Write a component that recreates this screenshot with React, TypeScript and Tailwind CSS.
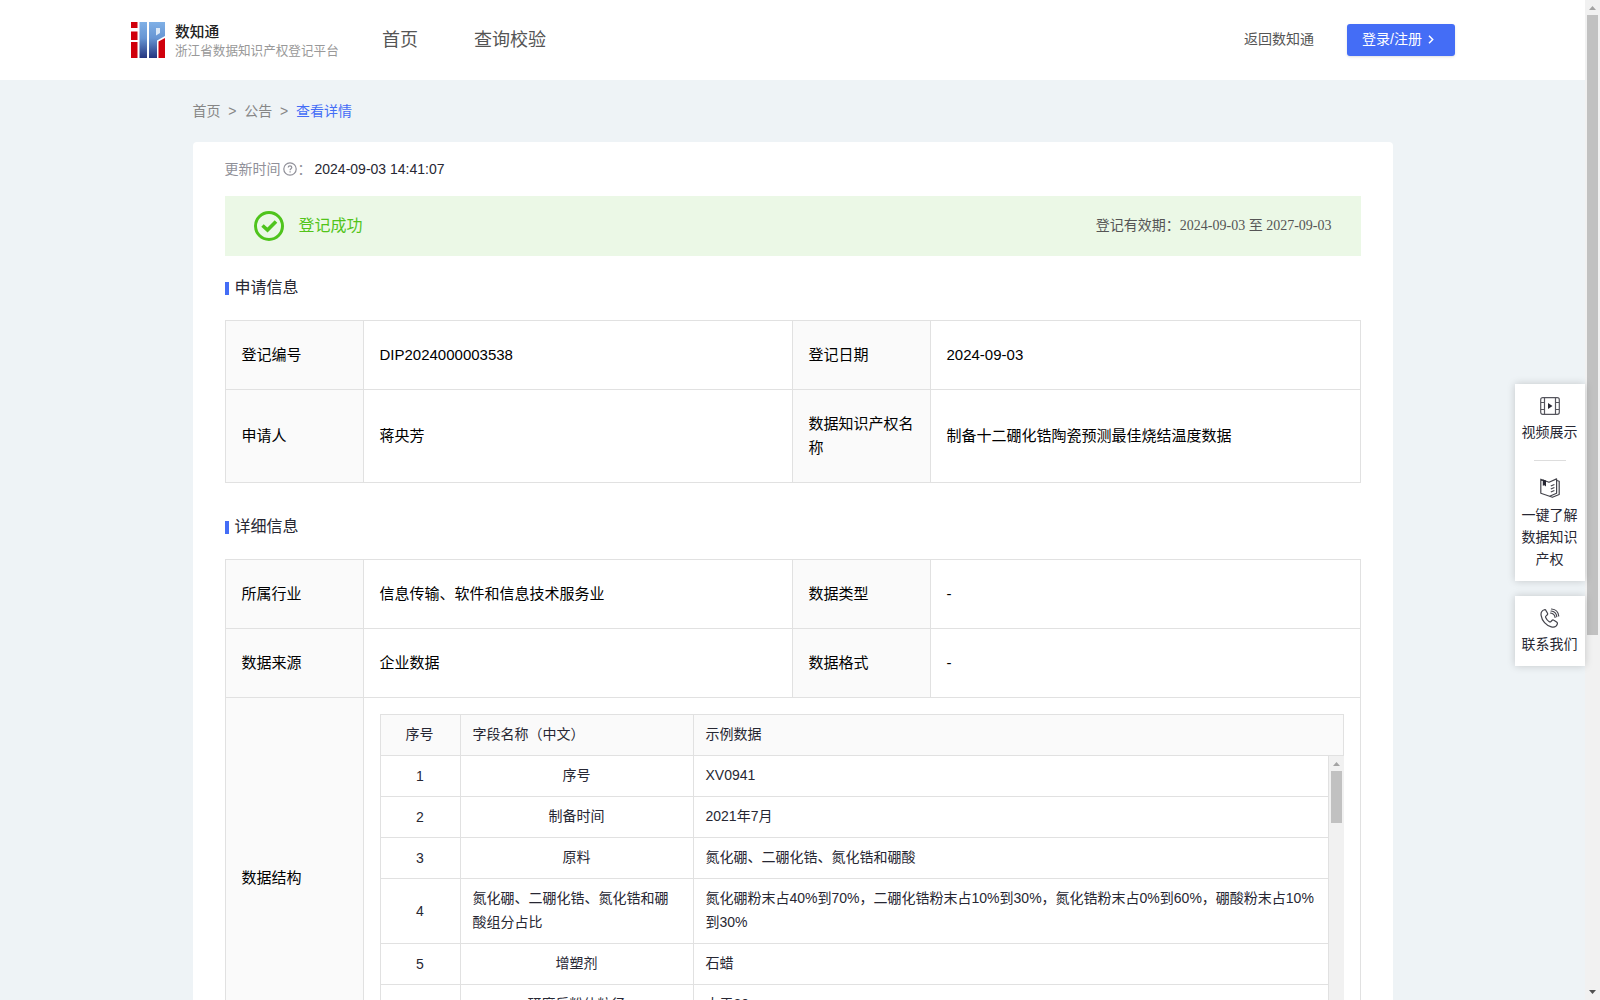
import type { ReactNode } from "react";

type FieldRow = { no: number; name: string; sample: string; wrap?: boolean };

const FIELDS: FieldRow[] = [
  { no: 1, name: "序号", sample: "XV0941" },
  { no: 2, name: "制备时间", sample: "2021年7月" },
  { no: 3, name: "原料", sample: "氮化硼、二硼化锆、氮化锆和硼酸" },
  {
    no: 4,
    name: "氮化硼、二硼化锆、氮化锆和硼酸组分占比",
    sample: "氮化硼粉末占40%到70%，二硼化锆粉末占10%到30%，氮化锆粉末占0%到60%，硼酸粉末占10%到30%",
    wrap: true,
  },
  { no: 5, name: "增塑剂", sample: "石蜡" },
  { no: 6, name: "研磨后粉体粒径", sample: "大于20" },
];

function Logo() {
  return (
    <svg width="34" height="36" viewBox="0 0 34 36" className="shrink-0">
      <defs>
        <linearGradient id="logoBlue" gradientUnits="userSpaceOnUse" x1="0" y1="0" x2="0" y2="36">
          <stop offset="0" stopColor="#7fb0e6" />
          <stop offset="0.45" stopColor="#6795d3" />
          <stop offset="1" stopColor="#25357f" />
        </linearGradient>
      </defs>
      <path d="M0 0h6.500v6H0zM0 9.500h6.500V18H0zM0 20h6.500v16H0z" fill="#d0000c" />
      <path d="M8.500 0H16v36H8.500z" fill="url(#logoBlue)" />
      <path d="M18 0h16v14l-8 4.500V36h-8z" fill="url(#logoBlue)" />
      <path d="M25 6h4v5l-4 2.500z" fill="#dce9f8" />
      <path d="M27.500 19.500L34 16v20h-6.500z" fill="#d0000c" />
    </svg>
  );
}

function Header() {
  return (
    <header className="flex h-20 items-center bg-white pl-[131px] pr-[130px]">
      <Logo />
      <div className="ml-[10px] flex w-[172px] flex-col whitespace-nowrap pt-0.5">
        <span className="text-[14.7px] font-medium leading-5 text-[#222]">数知通</span>
        <span className="text-[12.6px] leading-[19px] text-[#999]">浙江省数据知识产权登记平台</span>
      </div>
      <nav className="ml-[35px] flex gap-14 text-lg text-[#555]">
        <a>首页</a>
        <a>查询校验</a>
      </nav>
      <a className="ml-auto pb-0.5 text-sm text-[#555]">返回数知通</a>
      <button className="ml-[33px] flex h-8 w-[108px] items-center rounded-[3px] bg-[#446df6] pb-0.5 pl-[15px] text-sm text-white shadow-sm">
        登录/注册
        <svg width="6" height="9" viewBox="0 0 6 9" className="ml-[6px]">
          <path d="M1 .8l3.700 3.700L1 8.200" fill="none" stroke="#fff" strokeWidth="1.500" />
        </svg>
      </button>
    </header>
  );
}

function SectionTitle({ children }: { children: ReactNode }) {
  return (
    <h2 className="flex h-6 items-center text-base text-[#272733]">
      <i className="mr-[6px] mt-px h-[13px] w-1 bg-[#446df6]" />
      {children}
    </h2>
  );
}

function Label({ children }: { children: ReactNode }) {
  return (
    <div className="flex items-center border-b border-r border-[#e1e1e1] bg-[#fafafa] pl-4 pr-[14px]">{children}</div>
  );
}

function Value({ children }: { children: ReactNode }) {
  return <div className="flex items-center border-b border-r border-[#e1e1e1] px-4">{children}</div>;
}

function FieldTable() {
  return (
    <div className="h-[328px] w-[964px] overflow-hidden text-sm leading-6 text-[#272733]">
      <div className="grid h-[42px] grid-cols-[80px_233px_1fr] border border-[#e1e1e1] bg-[#fafafa]">
        <div className="flex items-center justify-center border-r border-[#e1e1e1] pb-0.5 pr-px">序号</div>
        <div className="flex items-center border-r border-[#e1e1e1] pb-0.5 pl-3">字段名称（中文）</div>
        <div className="flex items-center pb-0.5 pl-3">示例数据</div>
      </div>
      <div className="flex">
        <div className="flex-1 border-x border-[#e1e1e1]">
          {FIELDS.map((f) => (
            <div
              key={f.no}
              className={`grid grid-cols-[80px_233px_1fr] border-b border-[#e1e1e1] ${f.wrap ? "h-[65px]" : "h-[41px]"}`}
            >
              <div className="flex items-center justify-center border-r border-[#e1e1e1]">{f.no}</div>
              <div className={`flex items-center border-r border-[#e1e1e1] px-3 pb-0.5 ${f.wrap ? "" : "justify-center"}`}>
                {f.name}
              </div>
              <div className="flex items-center pb-0.5 pl-3 pr-2">{f.sample}</div>
            </div>
          ))}
        </div>
        <div className="flex w-[15px] flex-col items-center bg-[#f1f1f1]">
          <svg width="15" height="15" viewBox="0 0 15 15">
            <path d="M4 10h7L7.500 6z" fill="#a3a3a3" />
          </svg>
          <div className="h-[52px] w-[11px] bg-[#c1c1c1]" />
        </div>
      </div>
    </div>
  );
}

function VideoIcon() {
  return (
    <svg width="20" height="18" viewBox="0 0 20 18" fill="none" stroke="#55555d" strokeWidth="1.200">
      <rect x=".7" y=".7" width="18.600" height="16.600" rx="2" />
      <path d="M4.500 1v16M15.500 1v16M1 5.500h3.500M1 12.500h3.500M15.500 5.500H19M15.500 12.500H19" />
      <path d="M8 6l4.500 3L8 12z" fill="#272733" stroke="none" />
    </svg>
  );
}

function BookIcon() {
  return (
    <svg width="20" height="20" viewBox="0 0 20 20" fill="none" stroke="#44444c" strokeWidth="1.200" strokeLinejoin="round">
      <path d="M.8 1.200L9 4.300 16.600.9v14.300L9.600 18.200.8 15.200z" />
      <path d="M16.800 2.500l2.400.8v13.200l-6.800 2.800-2.800-1" />
      <path d="M2.800 1.600l3.200 1v6L4.400 7.200 2.800 7.800z" fill="#272733" stroke="none" />
      <path d="M10.800 8l3.600-1.500M10.800 11l3.600-1.500M10.800 14l3.600-1.500" />
    </svg>
  );
}

function PhoneIcon() {
  return (
    <svg width="20" height="20" viewBox="0 0 20 20" fill="none" stroke="#44444c" strokeWidth="1.200" strokeLinecap="round" strokeLinejoin="round">
      <path d="M4.400 1.800C2 2.600.7 4.700 1.100 7.400c.8 5.400 5 10.200 10.200 11.500 3 .7 5.300-.6 6-2.800.3-.9 0-1.500-.7-2l-2.700-1.800c-.7-.5-1.400-.4-2 .2l-1 1.100c-.5.5-1 .5-1.600.1-1.700-1.100-2.900-2.600-3.600-4.300-.3-.6-.1-1.100.4-1.500l1-.9c.6-.5.7-1.100.4-1.800L6 2.600c-.3-.7-.9-1-1.600-.8z" />
      <path d="M10.500 5c2.500.3 4.200 2 4.600 4.400M11.500 1c3.900.3 6.800 3.100 7.200 7" />
      <path d="M11 3c3.200.3 5.400 2.500 5.800 5.600" />
    </svg>
  );
}

// Floating shortcuts on the right edge
function SideBar() {
  return (
    <aside className="absolute right-[15px] top-96 flex w-[70px] flex-col gap-[15px] text-center text-sm leading-[22px] text-[#272733]">
      <div className="flex h-[197px] flex-col items-center bg-white pr-px pt-[13px] shadow-[0_0_8px_rgba(0,0,0,0.18)]">
        <VideoIcon />
        <span className="mt-[6px]">视频展示</span>
        <i className="mt-[17px] h-px w-8 bg-[#ddd]" />
        <span className="mt-[17px]">
          <BookIcon />
        </span>
        <span className="mt-[6px] w-[58px]">一键了解数据知识产权</span>
      </div>
      <div className="flex h-[70px] flex-col items-center bg-white pr-px pt-3 shadow-[0_0_8px_rgba(0,0,0,0.18)]">
        <PhoneIcon />
        <span className="mt-[5px]">联系我们</span>
      </div>
    </aside>
  );
}

function PageScrollbar() {
  return (
    <div className="flex w-[15px] flex-col items-center bg-[#f1f1f1]">
      <svg width="15" height="15" viewBox="0 0 15 15">
        <path d="M4 10h7L7.500 6z" fill="#a3a3a3" />
      </svg>
      <div className="h-[620px] w-[11px] bg-[#c1c1c1]" />
      <svg width="15" height="15" viewBox="0 0 15 15" className="mt-auto">
        <path d="M4 5h7L7.500 9z" fill="#505050" />
      </svg>
    </div>
  );
}

export default function App() {
  return (
    <div className="relative flex h-[1000px] w-[1600px] overflow-hidden bg-[#eef3f6] font-['Liberation_Sans','Noto_Sans_CJK_SC',sans-serif]">
      <div className="min-w-0 flex-1">
        <Header />
        <main className="mx-auto w-[1200px]">
          <div className="flex h-[62px] items-center gap-[7.8px] pb-px text-sm text-[#868686]">
            <span>首页</span>
            <span>&gt;</span>
            <span>公告</span>
            <span>&gt;</span>
            <span className="text-[#446df6]">查看详情</span>
          </div>

          <div className="rounded-t bg-white px-8 pt-4">
            <div className="flex h-[22px] items-center text-sm text-[#909099]">
              更新时间
              <svg width="14" height="14" viewBox="0 0 14 14" className="ml-[2px]" fill="none" stroke="#909099" strokeWidth="1.200">
                <circle cx="7" cy="7" r="6.200" />
                <path d="M5.200 5.600c0-1.100.8-1.700 1.800-1.700s1.800.7 1.800 1.600c0 1.200-1.700 1.300-1.700 2.700M7.100 9.300v1.200" />
              </svg>
              <span className="w-[18px] pl-px">：</span>
              <span className="text-[#272733]">2024-09-03 14:41:07</span>
            </div>

            <div className="mt-4 flex h-[60px] items-center bg-[#ebf8e6] pl-[29px] pr-[29px]">
              <svg width="30" height="30" viewBox="0 0 30 30" fill="none" stroke="#4fc41c">
                <circle cx="15" cy="15" r="13.500" strokeWidth="3" />
                <path d="M8.500 14.500l5 4.500 8.500-8.500" strokeWidth="3.600" />
              </svg>
              <span className="ml-[15px] text-base text-[#52c41a]">登记成功</span>
              <span className="ml-auto pb-px font-['Liberation_Serif','Noto_Sans_CJK_SC',serif] text-sm text-[#555]">
                登记有效期：2024-09-03 至 2027-09-03
              </span>
            </div>

            <div className="mt-5">
              <SectionTitle>申请信息</SectionTitle>
            </div>
            <div className="mt-5 grid grid-cols-[138px_429px_138px_430px] grid-rows-[69px_93px] border-l border-t border-[#e1e1e1] text-[15px] leading-6 text-black">
              <Label>登记编号</Label>
              <Value>DIP2024000003538</Value>
              <Label>登记日期</Label>
              <Value>2024-09-03</Value>
              <Label>申请人</Label>
              <Value>蒋央芳</Value>
              <Label>数据知识产权名称</Label>
              <Value>制备十二硼化锆陶瓷预测最佳烧结温度数据</Value>
            </div>

            <div className="mt-8">
              <SectionTitle>详细信息</SectionTitle>
            </div>
            <div className="mt-5 grid grid-cols-[138px_429px_138px_430px] grid-rows-[69px_69px_361px] border-l border-t border-[#e1e1e1] text-[15px] leading-6 text-black">
              <Label>所属行业</Label>
              <Value>信息传输、软件和信息技术服务业</Value>
              <Label>数据类型</Label>
              <Value>-</Value>
              <Label>数据来源</Label>
              <Value>企业数据</Value>
              <Label>数据格式</Label>
              <Value>-</Value>
              <Label>数据结构</Label>
              <div className="col-span-3 border-b border-r border-[#e1e1e1] pl-4 pt-4">
                <FieldTable />
              </div>
            </div>
          </div>
        </main>
      </div>
      <PageScrollbar />
      <SideBar />
    </div>
  );
}
